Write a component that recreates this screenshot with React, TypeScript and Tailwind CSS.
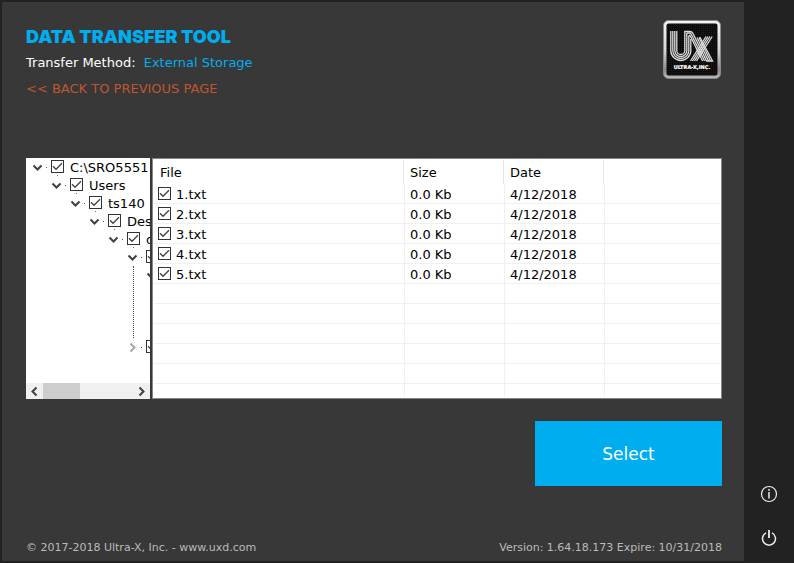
import { useState } from "react";

type TreeRow = { label?: string; level: number; open: boolean };

const treeRows: TreeRow[] = [
  { label: "C:\\SRO5551", level: 0, open: true },
  { label: "Users", level: 1, open: true },
  { label: "ts140", level: 2, open: true },
  { label: "Desktop", level: 3, open: true },
  { label: "d", level: 4, open: true },
  { level: 5, open: true },
];

const files = ["1.txt", "2.txt", "3.txt", "4.txt", "5.txt"];
const emptyRows = [0, 1, 2, 3, 4];

function CheckBox({ label }: { label: string }) {
  const [on, setOn] = useState(true);
  return (
    <span className="grid h-[13px] w-[13px] shrink-0">
      <input
        type="checkbox"
        aria-label={label}
        checked={on}
        onChange={() => setOn(!on)}
        className="peer [grid-area:1/1] h-[13px] w-[13px] appearance-none border border-[#333] bg-white"
      />
      <svg
        viewBox="0 0 13 13"
        className="pointer-events-none invisible [grid-area:1/1] h-[13px] w-[13px] peer-checked:visible"
        fill="none"
        stroke="#404040"
        strokeWidth="1.3"
      >
        <path d="M2 6.3 5 9.3 11 3.3" />
      </svg>
    </span>
  );
}

function Chevron({ dir, color = "#404040" }: { dir: "down" | "left" | "right"; color?: string }) {
  const d =
    dir === "down" ? "M1.5 3.5 5.5 7.5 9.5 3.5" : dir === "left" ? "M7.5 1.5 3.5 5.5 7.5 9.5" : "M3.5 1.5 7.5 5.5 3.5 9.5";
  return (
    <svg viewBox="0 0 11 11" className="h-[11px] w-[11px] shrink-0" fill="none" stroke={color} strokeWidth="2">
      <path d={d} />
    </svg>
  );
}

function TreeItem({ label, level, open }: TreeRow) {
  const name = label ?? "Folder";
  return (
    <li className="flex h-[18px] items-center whitespace-nowrap" style={{ paddingLeft: 6 + level * 19 }}>
      <button type="button" aria-label={`Toggle ${name}`} className="flex shrink-0">
        <Chevron dir={open ? "down" : "right"} color={open ? "#404040" : "#a6a6a6"} />
      </button>
      <span className="mr-1 ml-[3px] h-px w-px shrink-0 bg-[#555]" />
      <span className="flex h-[18px] shrink-0 flex-col items-center justify-between pt-0.5">
        <CheckBox label={name} />
        <span className="h-px w-px bg-[#777]" />
      </span>
      {label && <span className="ml-1.5 pt-0.5 leading-[18px]">{label}</span>}
    </li>
  );
}

function FolderTree() {
  return (
    <div className="flex w-[124px] shrink-0 flex-col overflow-hidden bg-white">
      <ul className="flex-1 overflow-hidden">
        {treeRows.map((row) => (
          <TreeItem key={row.level} {...row} />
        ))}
        <li className="ml-[107px] h-[72px] border-l border-dotted border-[#555]">
          <ul className="-ml-[108px]">
            <TreeItem level={6} open />
          </ul>
        </li>
        <TreeItem level={5} open={false} />
      </ul>
      <div className="flex h-4 items-stretch bg-[#f0f0f0]">
        <button type="button" aria-label="Scroll left" className="flex w-[17px] items-center justify-center">
          <Chevron dir="left" />
        </button>
        <div className="flex-1">
          <div className="h-full w-[37px] bg-[#cdcdcd]" />
        </div>
        <button type="button" aria-label="Scroll right" className="flex w-[17px] items-center justify-center">
          <Chevron dir="right" />
        </button>
      </div>
    </div>
  );
}

function FileTable() {
  const cell = "border-r border-b border-[#f0f0f0] p-0 pl-[5px]";
  const last = "border-b border-[#f0f0f0] p-0";
  const head = "h-6 border-r border-[#e5e5e5] mr-px leading-[26px]";
  return (
    <div className="min-w-0 flex-1 border border-[#828790] bg-white p-px">
      <table className="w-full table-fixed border-separate border-spacing-0 text-left">
        <colgroup>
          <col className="w-[251px]" />
          <col className="w-[100px]" />
          <col className="w-[100px]" />
          <col />
        </colgroup>
        <thead>
          <tr>
            <th className="p-0 font-normal"><div className={`${head} pl-1.5`}>File</div></th>
            <th className="p-0 font-normal"><div className={`${head} pl-[5px]`}>Size</div></th>
            <th className="p-0 font-normal"><div className={`${head} pl-[5px]`}>Date</div></th>
            <th className="p-0" />
          </tr>
        </thead>
        <tbody>
          {files.map((name) => (
            <tr key={name} className="h-5">
              <td className="border-r border-b border-[#f0f0f0] p-0 pl-1">
                <div className="flex h-[19px] items-start gap-[5px]">
                  <span className="pt-[3px]"><CheckBox label={name} /></span>
                  <span className="leading-[22px]">{name}</span>
                </div>
              </td>
              <td className={cell}><div className="h-[19px] leading-[22px]">0.0 Kb</div></td>
              <td className={cell}><div className="h-[19px] leading-[22px]">4/12/2018</div></td>
              <td className={last} />
            </tr>
          ))}
          {emptyRows.map((n) => (
            <tr key={n} className="h-5">
              <td className={cell} />
              <td className={cell} />
              <td className={cell} />
              <td className={last} />
            </tr>
          ))}
          <tr className="h-[13px]">
            <td className="border-r border-[#f0f0f0] p-0" />
            <td className="border-r border-[#f0f0f0] p-0" />
            <td className="border-r border-[#f0f0f0] p-0" />
            <td className="p-0" />
          </tr>
        </tbody>
      </table>
    </div>
  );
}

function Logo() {
  return (
    <svg viewBox="0 0 58 59" className="h-[59px] w-[58px] shrink-0" role="img" aria-label="Ultra-X, Inc.">
      <defs>
        <linearGradient id="frame" x1="0" y1="0" x2="0" y2="1">
          <stop offset="0" stopColor="#f4f4f4" />
          <stop offset="0.5" stopColor="#d8d8d8" />
          <stop offset="0.85" stopColor="#8c8c8c" />
          <stop offset="1" stopColor="#bbb" />
        </linearGradient>
        <pattern id="mesh" width="2" height="2" patternUnits="userSpaceOnUse">
          <rect width="2" height="2" fill="#0b0b0b" />
          <rect width="1" height="1" fill="#1c1c1c" />
        </pattern>
      </defs>
      <rect x="0.5" y="0.5" width="57" height="58" rx="5" fill="url(#frame)" stroke="#8a8a8a" />
      <rect x="3.5" y="3.5" width="51" height="52" rx="2" fill="url(#mesh)" />
      <g fill="none" stroke="#dcdcdc" strokeWidth="1.3">
        <path d="M7.8 11V30.5A10 10 0 0 0 27.8 30.5V19" />
        <path d="M9.8 11V30.5A8 8 0 0 0 25.8 30.5V15.5" />
        <path d="M11.8 11V30.5A6 6 0 0 0 23.8 30.5V13" />
        <path d="M13.8 11V30.5A4 4 0 0 0 21.8 30.5V11.5H26.5Q29 11.5 30 13.5L43.6 41H49.6L36.8 17" />
        <path d="M23.8 13H26Q27.5 13 28.4 14.5L41.6 41" />
        <path d="M25.8 15.5Q27 15 27.8 17L39.6 41" />
        <path d="M34 17.5 45.6 41M36 17.5 47.6 41" />
        <path d="M43 16.5 27.5 41M45 16.5 29.5 41M47 16.5 31.5 41M49.2 16.5 33.5 41" />
      </g>
      <text
        x="29"
        y="49"
        textAnchor="middle"
        fontFamily="DejaVu Sans, sans-serif"
        fontWeight="bold"
        fontSize="5"
        fill="#fff"
        stroke="#fff"
        strokeWidth="0.2"
      >
        ULTRA-X,INC.
      </text>
    </svg>
  );
}

export default function App() {
  return (
    <div className="flex min-h-screen bg-[#222] font-['DejaVu_Sans',Verdana,sans-serif] text-[13px] text-black">
      <main className="my-0.5 ml-0.5 flex min-w-0 flex-1 flex-col bg-[#383838] pt-[18px] pr-[22px] pb-[5px] pl-6">
        <header className="flex items-start justify-between pr-px">
          <div className="pt-[5px]">
            <h1 className="font-['Inter',sans-serif] text-[18px] leading-6 font-black text-[#00adef]">
              DATA TRANSFER TOOL
            </h1>
            <p className="pt-1 leading-5 text-white">
              Transfer Method: <span className="ml-1 text-[#00adef]">External Storage</span>
            </p>
            <a href="#previous" className="mt-1.5 block leading-5 text-[#c0562f]">
              &lt;&lt; BACK TO PREVIOUS PAGE
            </a>
          </div>
          <Logo />
        </header>
        <section className="mt-[59px] flex gap-0.5">
          <FolderTree />
          <FileTable />
        </section>
        <button type="button" className="mt-[22px] h-[65px] w-[187px] self-end bg-[#00adef] pt-0.5 text-[17px] text-white">
          Select
        </button>
        <footer className="mt-auto flex justify-between text-[11px] leading-4 text-[#bbb]">
          <span>© 2017-2018 Ultra-X, Inc. - www.uxd.com</span>
          <span>Version: 1.64.18.173 Expire: 10/31/2018</span>
        </footer>
      </main>
      <aside className="flex w-[50px] flex-col items-center justify-end gap-6 pb-[15px]">
        <button type="button" aria-label="Information">
          <svg viewBox="0 0 20 20" className="h-5 w-5" fill="none" stroke="#eee">
            <circle cx="10" cy="10" r="7.5" strokeWidth="1.2" />
            <path d="M10 8V14.5M10 5V6.7" strokeWidth="1.5" />
          </svg>
        </button>
        <button type="button" aria-label="Power">
          <svg viewBox="0 0 20 20" className="h-5 w-5" fill="none" stroke="#eee">
            <path d="M7 4.9A6.5 6.5 0 1 0 13 4.9" strokeWidth="1.5" />
            <path d="M10 2V10" strokeWidth="1.8" />
          </svg>
        </button>
      </aside>
    </div>
  );
}
